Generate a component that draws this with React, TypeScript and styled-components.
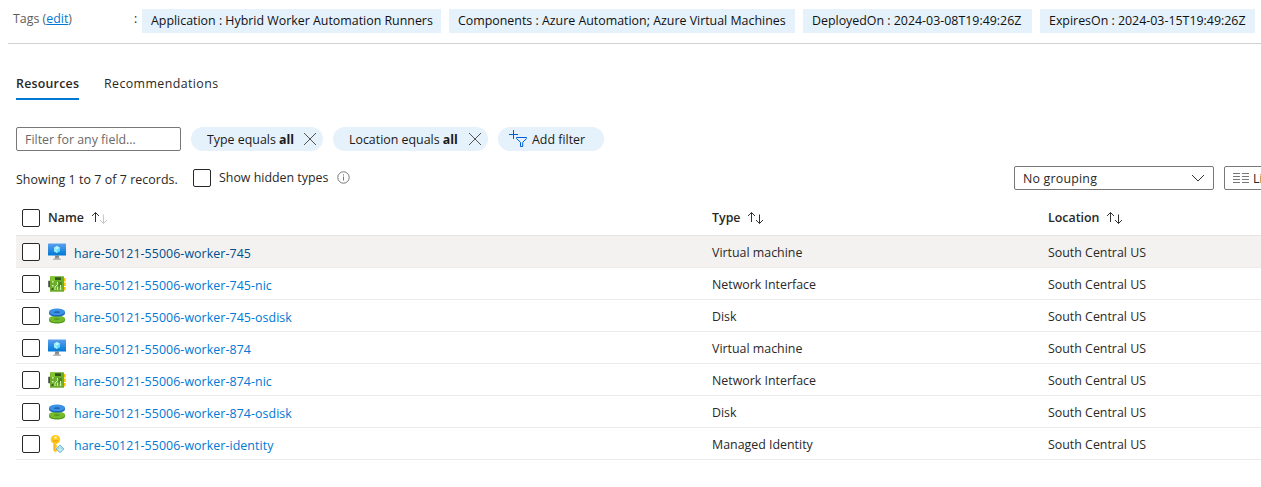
import React from 'react';
import styled, { createGlobalStyle } from 'styled-components';

const Global = createGlobalStyle`
  *, *::before, *::after { box-sizing: border-box; }
  html, body { margin: 0; background: #fff; overflow: hidden; }
  body {
    font-family: "Open Sans", "Noto Sans", sans-serif;
    font-size: 12.4px;
    line-height: 18px;
    color: #292827;
  }
`;

const Page = styled.main`
  width: 1261px;
  height: 487px;
  overflow: hidden;
  display: flex;
  flex-direction: column;
`;

const Text = styled.span<{ $spacing?: number; $weight?: number }>`
  white-space: pre;
  letter-spacing: ${(p) => p.$spacing ?? 0}px;
  font-weight: ${(p) => p.$weight ?? 400};
`;

const TagBar = styled.section`
  display: flex;
  height: 44px;
  margin-left: 8px;
  padding: 9px 0 0 5px;
  border-bottom: 1px solid #d2d2d2;
`;

const TagLabel = styled.div`
  width: 121px;
  flex: none;
  padding-top: 1px;
  color: #605e5c;
`;

const Colon = styled.span`
  width: 8px;
  flex: none;
  padding-top: 1px;
`;

const EditLink = styled.a`
  color: #0078d4;
  text-decoration: underline;
`;

const TagList = styled.div`
  display: flex;
  gap: 8px;
  flex: none;
`;

const Tag = styled.div<{ $width: number }>`
  width: ${(p) => p.$width}px;
  height: 24px;
  padding-left: 9px;
  line-height: 23px;
  background: #e5f1fb;
  color: #111;
`;

const Tabs = styled.nav`
  display: flex;
  gap: 25px;
  height: 27px;
  margin: 29px 0 0 16px;
`;

const Tab = styled.div<{ $active?: boolean }>`
  height: 27px;
  line-height: 22px;
  border-bottom: 2px solid ${(p) => (p.$active ? '#0078d4' : 'transparent')};
  width: ${(p) => (p.$active ? '63px' : 'auto')};
  white-space: nowrap;
`;

const Filters = styled.div`
  display: flex;
  gap: 10px;
  height: 24px;
  margin: 27px 0 0 16px;
`;

const FilterInput = styled.input`
  width: 165px;
  height: 24px;
  padding: 0 8px;
  border: 1px solid #7a7876;
  border-radius: 2px;
  font: inherit;
  outline: none;
  &::placeholder { color: #6b6967; opacity: 1; }
`;

const Pill = styled.div<{ $width: number; $pad?: number }>`
  display: flex;
  align-items: center;
  justify-content: space-between;
  width: ${(p) => p.$width}px;
  height: 24px;
  padding: 0 6px 0 ${(p) => p.$pad ?? 16}px;
  border-radius: 12px;
  background: #e5f1fb;
  color: #1b1a19;
`;

const PillText = styled(Text)`
  padding-top: 1px;
`;

const AddPill = styled(Pill)`
  justify-content: flex-start;
  gap: 4px;
`;

const Summary = styled.div`
  display: flex;
  height: 24px;
  margin: 15px 0 0 16px;
`;

const RecordCount = styled.div`
  width: 177px;
  flex: none;
  padding-top: 5px;
`;

const HiddenTypes = styled.label`
  display: flex;
  flex: none;
  width: 821px;
  padding-top: 3px;
`;

const HiddenLabel = styled.span`
  width: 118px;
  flex: none;
  margin-left: 8px;
  line-height: 17px;
`;

const Checkbox = styled.span`
  display: block;
  flex: none;
  width: 18px;
  height: 18px;
  border: 1px solid #292827;
  border-radius: 2px;
  background: #fff;
`;

const Select = styled.div<{ $width: number }>`
  display: flex;
  flex: none;
  align-items: center;
  justify-content: space-between;
  width: ${(p) => p.$width}px;
  height: 24px;
  padding: 0 8px;
  border: 1px solid #7a7876;
  border-radius: 2px;
  & + & { margin-left: 10px; justify-content: flex-start; gap: 4px; }
`;

const SelectText = styled(Text)`
  padding-top: 1px;
`;

const Table = styled.div`
  margin: 10px 0 0 16px;
`;

const Row = styled.div<{ $hover?: boolean }>`
  display: grid;
  grid-template-columns: 26px 26px 638px 336px 1fr;
  align-items: center;
  height: 32px;
  padding-left: 6px;
  border-bottom: 1px solid #edebe9;
  background: ${(p) => (p.$hover ? '#f3f2f1' : '#fff')};
`;

const HeaderRow = styled.div`
  display: grid;
  grid-template-columns: 26px 664px 336px 1fr;
  align-items: center;
  height: 36px;
  padding-left: 6px;
  border-bottom: 1px solid #e6e4e2;
`;

const HeaderCell = styled.div`
  display: flex;
  align-items: center;
  gap: 7px;
`;

const Name = styled.a<{ $hover?: boolean }>`
  padding-top: 4px;
  color: ${(p) => (p.$hover ? '#004e8c' : '#0078d4')};
`;

const Cell = styled.div`
  padding-top: 2px;
`;

const Close = () => (
  <svg width="14" height="14" viewBox="0 0 14 14" fill="none" stroke="#55534f" strokeWidth="1">
    <path d="M1 1l12 12M13 1L1 13" />
  </svg>
);

const AddFilterIcon = () => (
  <svg width="19" height="18" viewBox="0 0 19 18" fill="none" stroke="#015cda" strokeWidth="1">
    <path d="M4.500 0v9M0 4.500h9" />
    <path d="M7.500 7.500h10v1l-3.800 3.800v4.200h-2.200v-4.200L7.500 8.500z" />
  </svg>
);

const InfoSvg = styled.svg`
  margin-top: 2px;
`;

const Info = () => (
  <InfoSvg width="13" height="13" viewBox="0 0 13 13" fill="none" stroke="#797775">
    <circle cx="6.500" cy="6.500" r="5.700" />
    <path d="M6.500 5.500v4M6.500 3.300v1.200" />
  </InfoSvg>
);

const Chevron = () => (
  <svg width="14" height="8" viewBox="0 0 14 8" fill="none" stroke="#323130" strokeWidth="1">
    <path d="M1 1l6 6 6-6" />
  </svg>
);

const ListIcon = () => (
  <svg width="16" height="10" viewBox="0 0 16 10" stroke="#797775" strokeWidth="1">
    <path d="M0 .5h7M9 .5h7M0 3.500h7M9 3.500h7M0 6.500h7M9 6.500h7M0 9.500h7M9 9.500h7" />
  </svg>
);

const Sort = ({ ascending }: { ascending?: boolean }) => (
  <svg width="17" height="14" viewBox="0 0 17 14" fill="none" strokeWidth="1">
    <path d="M4.500 11V1.500M1 5l3.500-3.500L8 5" stroke="#323130" />
    <path d="M12.500 3.500v9M9 9l3.500 3.500L16 9" stroke={ascending ? '#c8c6c4' : '#323130'} />
  </svg>
);

const VmIcon = () => (
  <svg width="18" height="18" viewBox="0 0 18 18">
    <defs>
      <linearGradient id="screen" x1="0" y1="1" x2="0" y2="0">
        <stop offset="0" stopColor="#0078d4" />
        <stop offset="1" stopColor="#5ea0ef" />
      </linearGradient>
      <linearGradient id="stand" x1="0" y1="0" x2="0" y2="1">
        <stop offset="0" stopColor="#707070" />
        <stop offset="1" stopColor="#c4c4c4" />
      </linearGradient>
    </defs>
    <rect y=".5" width="18" height="12" rx=".6" fill="url(#screen)" />
    <path d="M9 3l3 1.700v3.600L9 10 6 8.300V4.700z" fill="#50e6ff" />
    <path d="M9 3l3 1.700L9 6.500 6 4.700z" fill="#c3f1ff" />
    <path d="M6 4.700l3 1.800V10L6 8.300z" fill="#9cebff" />
    <path d="M7.200 12.500h3.600c0 2 .5 3.200 2.200 3.600v.9H5v-.9c1.700-.4 2.200-1.600 2.200-3.600z" fill="url(#stand)" />
  </svg>
);

const NicIcon = () => (
  <svg width="18" height="18" viewBox="0 0 18 18">
    <path d="M.5 6H2v6H.5z" fill="#444" stroke="#555" strokeWidth=".6" />
    <path d="M15.500 3h2.200v3.500h-2.200zM15.500 7.500h2.200V11h-2.200zM15.500 12h2.200v3.200h-2.200z" fill="#fbc500" />
    <rect x="2" y="1.200" width="14" height="15.600" rx=".5" fill="#6cae2b" />
    <path d="M2.500 1.700H7V6H2.500z" fill="#86c52c" />
    <path d="M7 2.300h6V5H7z" fill="#2d5b14" />
    <path d="M10.500 7h3.500v5.500h-3.500z" fill="#4b8b20" />
    <path d="M4 6h1.500v1.500H4zM4 10h1.500v1.500H4zM12 10h1.200v5H12z" fill="#d6efb2" />
    <path d="M7 15v-3l2.500-2.500V7M9.500 15v-3.500" stroke="#d6efb2" fill="none" />
    <path d="M3.500 13h2v2h-2z" fill="#376b1a" />
  </svg>
);

const DiskIcon = () => (
  <svg width="18" height="18" viewBox="0 0 18 18">
    <path d="M1 11.500v1.700c0 2.100 3.600 3.300 8 3.300s8-1.200 8-3.300v-1.700z" fill="#559b22" />
    <ellipse cx="9" cy="11.800" rx="8" ry="3.300" fill="#76bc2d" />
    <ellipse cx="9" cy="12.100" rx="3" ry=".9" fill="#559b22" />
    <path d="M1 4.800v1.400c0 2.100 3.600 3.300 8 3.300s8-1.200 8-3.300V4.800z" fill="#1a66bd" />
    <ellipse cx="9" cy="4.800" rx="8" ry="3.300" fill="#3c91e5" />
    <ellipse cx="9" cy="5.200" rx="3" ry=".9" fill="#1b63b3" />
  </svg>
);

const KeyIcon = () => (
  <svg width="18" height="18" viewBox="0 0 18 18">
    <path d="M7.500 0C4.800 0 2.700 1.900 2.700 4.500c0 1.900 1.100 3.300 2.700 4v7l2 2 1.800-1.800v-1.500l-1.300-1.200 1.300-1.200v-1l-1.300-1.100 1.600-1.400c1.600-.7 2.700-2.100 2.700-3.800C12.200 1.900 10.200 0 7.500 0z" fill="#ffca1c" />
    <circle cx="7.500" cy="2.500" r="1.200" fill="#fff3b5" />
    <path d="M4.700 5.500h5.600M4.700 6.800h5.600" stroke="#eda513" strokeWidth=".8" />
    <path d="M6.300 9v6.500" stroke="#eda513" strokeWidth=".8" />
    <path d="M12 10l4 3.900-4 3.900-4-3.900z" fill="#9cd4e7" stroke="#5ba9c7" strokeWidth=".7" />
    <path d="M12 11v5.500M9.500 14l2.500 1.500 2.500-1.500" stroke="#e8faff" strokeWidth=".8" fill="none" />
  </svg>
);

const TAGS = [
  { text: 'Application : Hybrid Worker Automation Runners', width: 299 },
  { text: 'Components : Azure Automation; Azure Virtual Machines', width: 346 },
  { text: 'DeployedOn : 2024-03-08T19:49:26Z', width: 229 },
  { text: 'ExpiresOn : 2024-03-15T19:49:26Z', width: 215 },
];

const ROWS = [
  { name: 'hare-50121-55006-worker-745', type: 'Virtual machine', Icon: VmIcon },
  { name: 'hare-50121-55006-worker-745-nic', type: 'Network Interface', Icon: NicIcon },
  { name: 'hare-50121-55006-worker-745-osdisk', type: 'Disk', Icon: DiskIcon },
  { name: 'hare-50121-55006-worker-874', type: 'Virtual machine', Icon: VmIcon },
  { name: 'hare-50121-55006-worker-874-nic', type: 'Network Interface', Icon: NicIcon },
  { name: 'hare-50121-55006-worker-874-osdisk', type: 'Disk', Icon: DiskIcon },
  { name: 'hare-50121-55006-worker-identity', type: 'Managed Identity', Icon: KeyIcon },
];

export default function App() {
  return (
    <Page>
      <Global />
      <TagBar>
        <TagLabel><Text>Tags (<EditLink>edit</EditLink>)</Text></TagLabel>
        <Colon>:</Colon>
        <TagList>
          {TAGS.map((t) => (
            <Tag key={t.text} $width={t.width}><Text>{t.text}</Text></Tag>
          ))}
        </TagList>
      </TagBar>
      <Tabs>
        <Tab $active><Text $weight={600} $spacing={0.22}>Resources</Text></Tab>
        <Tab><Text $spacing={0.4}>Recommendations</Text></Tab>
      </Tabs>
      <Filters>
        <FilterInput placeholder="Filter for any field..." />
        <Pill $width={132}><PillText>Type equals <b>all</b></PillText><Close /></Pill>
        <Pill $width={155}><PillText>Location equals <b>all</b></PillText><Close /></Pill>
        <AddPill $width={106} $pad={11}><AddFilterIcon /><PillText>Add filter</PillText></AddPill>
      </Filters>
      <Summary>
        <RecordCount><Text $spacing={0.06}>Showing 1 to 7 of 7 records.</Text></RecordCount>
        <HiddenTypes>
          <Checkbox />
          <HiddenLabel><Text>Show hidden types</Text></HiddenLabel>
          <Info />
        </HiddenTypes>
        <Select $width={200}><SelectText $spacing={0.2}>No grouping</SelectText><Chevron /></Select>
        <Select $width={120}><ListIcon /><SelectText>List view</SelectText></Select>
      </Summary>
      <Table>
        <HeaderRow>
          <Checkbox />
          <HeaderCell><Text $weight={600}>Name</Text><Sort ascending /></HeaderCell>
          <HeaderCell><Text $weight={600}>Type</Text><Sort /></HeaderCell>
          <HeaderCell><Text $weight={600}>Location</Text><Sort /></HeaderCell>
        </HeaderRow>
        {ROWS.map(({ name, type, Icon }, i) => (
          <Row key={name} $hover={i === 0}>
            <Checkbox />
            <Icon />
            <Name $hover={i === 0}><Text $spacing={0.065}>{name}</Text></Name>
            <Cell><Text>{type}</Text></Cell>
            <Cell><Text>South Central US</Text></Cell>
          </Row>
        ))}
      </Table>
    </Page>
  );
}
